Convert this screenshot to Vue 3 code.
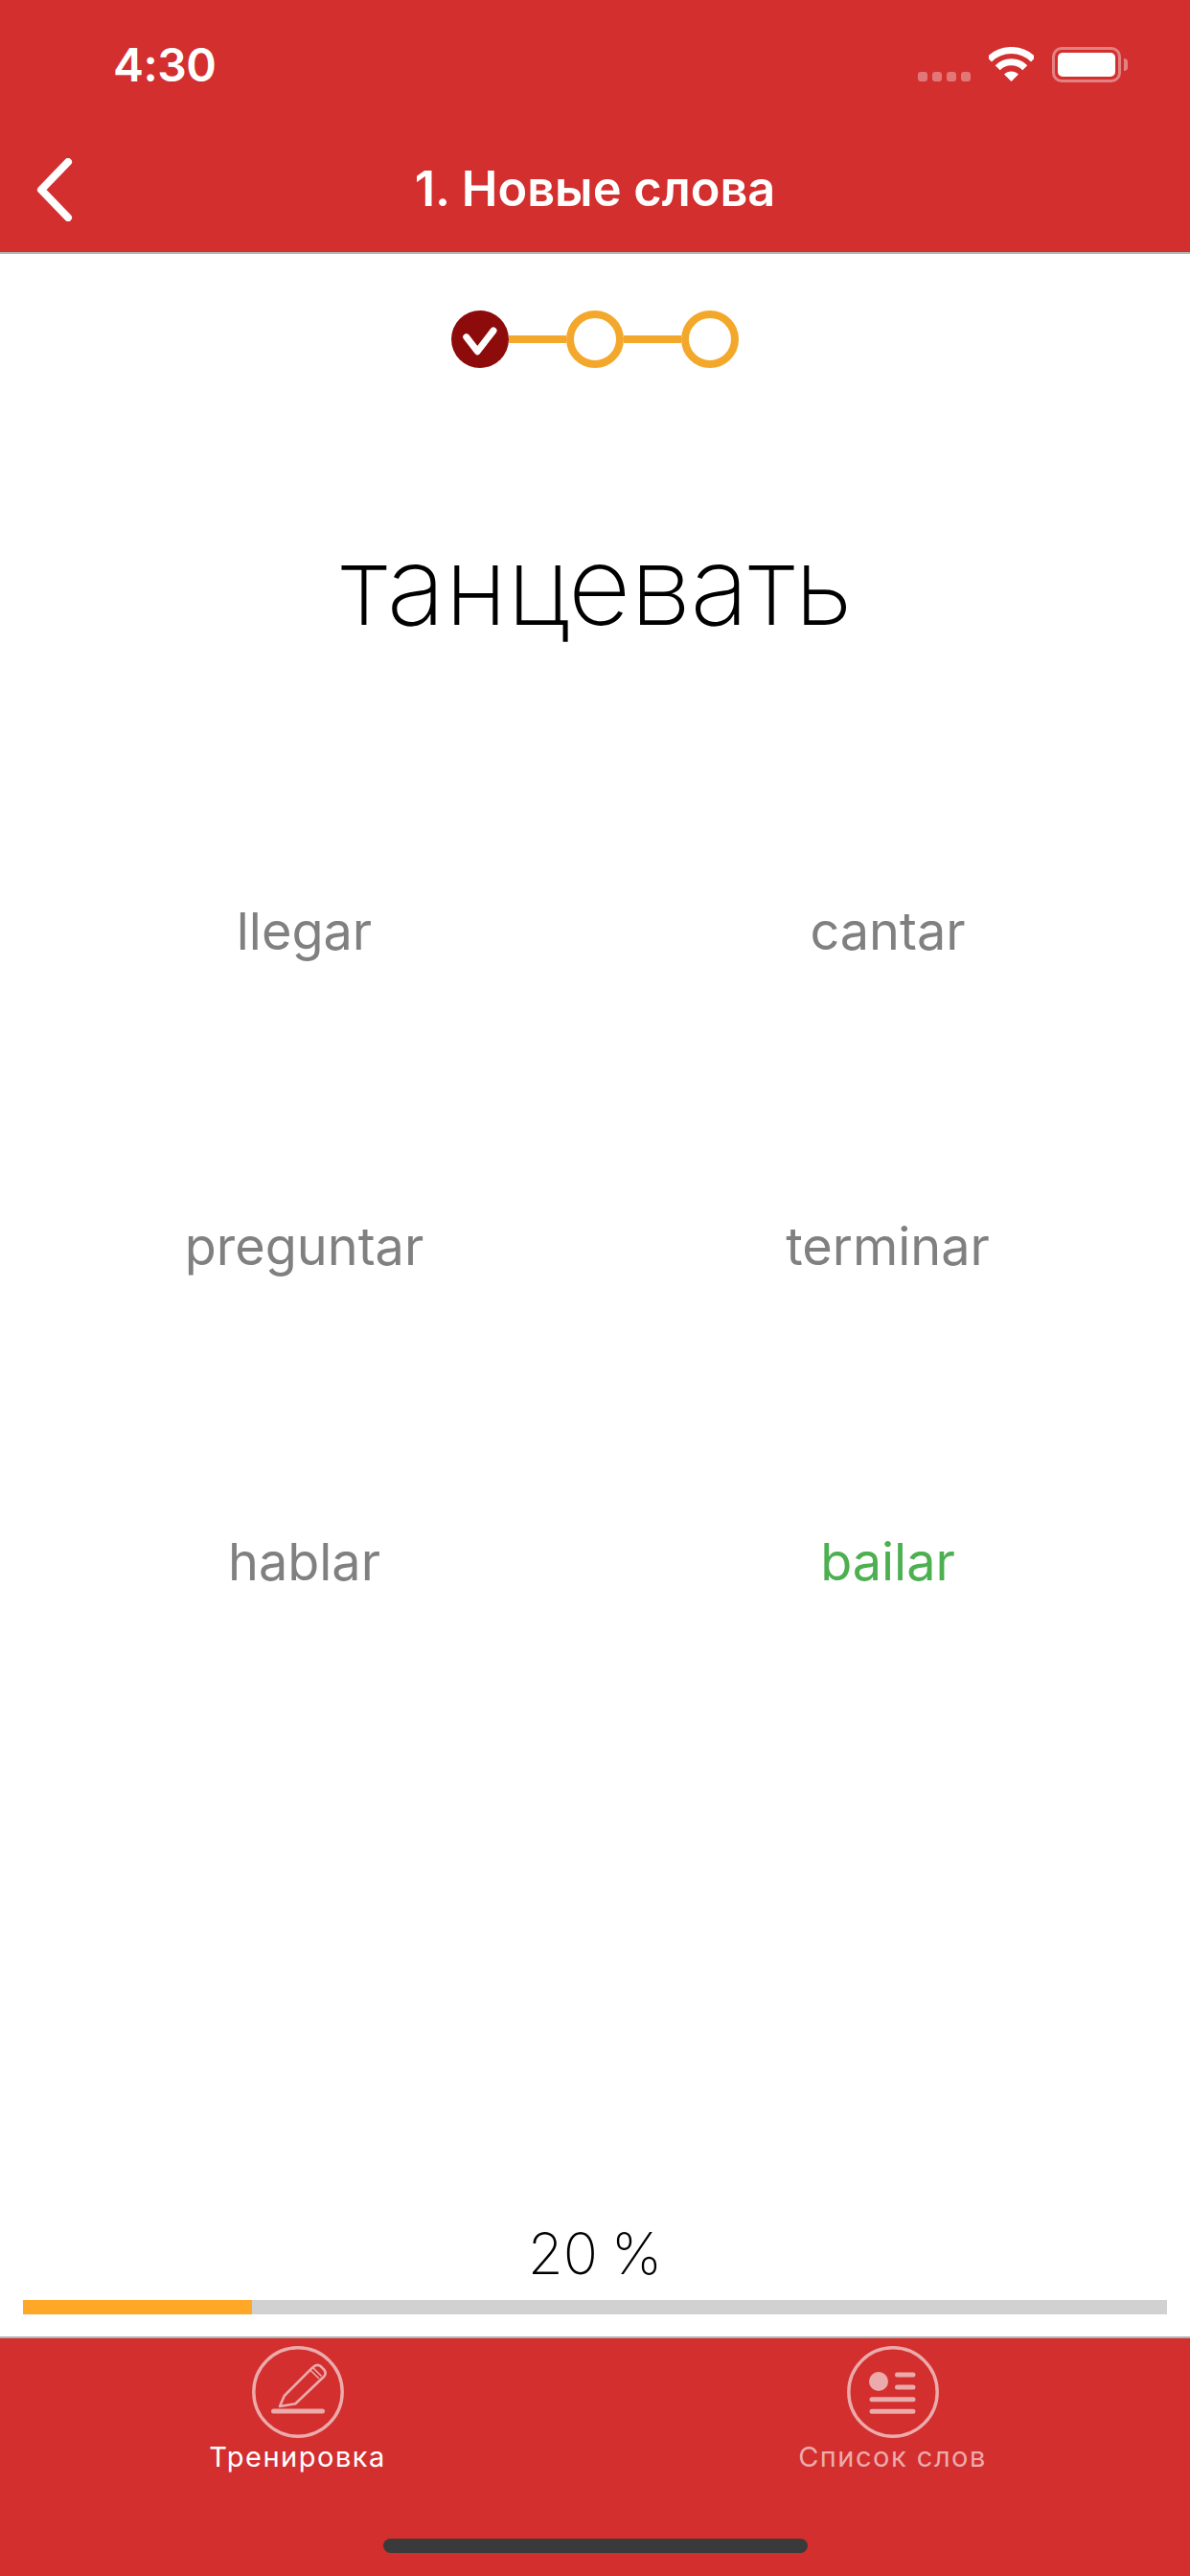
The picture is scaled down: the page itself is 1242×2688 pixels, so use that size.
<script setup>
import { ref } from 'vue'

const progresso = ref(20)
const opcoes = ref([
  { texto: 'llegar', certa: false },
  { texto: 'cantar', certa: false },
  { texto: 'preguntar', certa: false },
  { texto: 'terminar', certa: false },
  { texto: 'hablar', certa: false },
  { texto: 'bailar', certa: true }
])
</script>

<template>
  <div class="tela">
    <header class="topo">
      <div class="status">
        <span class="hora">4:30</span>
        <div class="status-icones">
          <div class="sinal"><i></i><i></i><i></i><i></i></div>
          <svg class="wifi" width="47" height="36" viewBox="0 0 47 36">
            <path d="M.5 13A32.5 32.5 0 0 1 46.5 13" fill="none" stroke="#fff" stroke-width="7" />
            <path d="M9.2 21.7A20.2 20.2 0 0 1 37.8 21.7" fill="none" stroke="#fff" stroke-width="7" />
            <path d="M23.5 36L16 28.5A10.6 10.6 0 0 1 31 28.5Z" fill="#fff" />
          </svg>
          <div class="bateria"><div class="carga"></div></div>
          <div class="bateria-ponta"></div>
        </div>
      </div>
      <nav class="barra">
        <svg class="voltar" width="40" height="66" viewBox="0 0 40 66">
          <path d="M33 4L5 33L33 62" fill="none" stroke="#fff" stroke-width="8" stroke-linecap="round" stroke-linejoin="round" />
        </svg>
        <h1>1. Новые слова</h1>
      </nav>
    </header>

    <main class="conteudo">
      <div class="passos">
        <div class="passo feito">
          <svg width="60" height="60" viewBox="0 0 60 60">
            <path d="M15.7 27.7L27.3 42.7L44 21" fill="none" stroke="#fff" stroke-width="7" stroke-linecap="round" stroke-linejoin="round" />
          </svg>
        </div>
        <div class="linha"></div>
        <div class="passo"></div>
        <div class="linha"></div>
        <div class="passo"></div>
      </div>

      <div class="palavra">танцевать</div>

      <div class="opcoes">
        <div
          v-for="opcao in opcoes"
          :key="opcao.texto"
          class="opcao"
          :class="{ certa: opcao.certa }"
        >
          {{ opcao.texto }}
        </div>
      </div>

      <div class="progresso">
        <div class="porcento">{{ progresso }} %</div>
        <div class="trilho">
          <div class="preenchido" :style="{ width: progresso + '%' }"></div>
        </div>
      </div>
    </main>

    <footer class="rodape">
      <div class="abas">
        <div class="aba ativa">
          <svg width="96" height="96" viewBox="0 0 96 96">
            <circle cx="48" cy="48" r="46.2" fill="none" stroke="#ecabab" stroke-width="3.4" />
            <path d="M29 63L33.7 52L63 22.7Q68 18 71.5 21L75.5 25Q78 29 75 32L45.3 60.3Z" fill="none" stroke="#ecabab" stroke-width="2.6" stroke-linejoin="round" />
            <path d="M60.7 25L70 34M63.5 22.5L72.5 31.5" fill="none" stroke="#ecabab" stroke-width="1.6" />
            <path d="M22.5 68H73.5" fill="none" stroke="#ecabab" stroke-width="5" stroke-linecap="round" />
          </svg>
          <span>Тренировка</span>
        </div>
        <div class="aba">
          <svg width="96" height="96" viewBox="0 0 96 96">
            <circle cx="48" cy="48" r="46.2" fill="none" stroke="#ecabab" stroke-width="3.4" />
            <circle cx="33" cy="37" r="10" fill="#ecabab" />
            <path d="M52.5 30H69M52.5 43H69M26 55.7H69M26 68.3H69" fill="none" stroke="#ecabab" stroke-width="5" stroke-linecap="round" />
          </svg>
          <span>Список слов</span>
        </div>
      </div>
      <div class="home"></div>
    </footer>
  </div>
</template>

<style scoped>
.tela {
  width: 1242px;
  height: 2688px;
  display: flex;
  flex-direction: column;
  background: #fff;
  font-family: Inter, "Liberation Sans", sans-serif;
  overflow: hidden;
}

.topo {
  background: #d32f2f;
  border-bottom: 2px solid #b3b3b3;
  color: #fff;
}

.status {
  height: 132px;
  box-sizing: border-box;
  padding: 50px 65px 0 118px;
  display: flex;
  justify-content: space-between;
  align-items: flex-start;
}

.hora {
  font-size: 48px;
  font-weight: 600;
  line-height: 36px;
  letter-spacing: -0.5px;
}

.status-icones {
  display: flex;
  align-items: flex-start;
  margin-top: -1px;
}

.sinal {
  display: flex;
  gap: 5px;
  margin: 26px 19px 0 0;
}

.sinal i {
  width: 10px;
  height: 10px;
  border-radius: 3px;
  background: rgba(255, 255, 255, 0.35);
}

.bateria {
  width: 72px;
  height: 37px;
  box-sizing: border-box;
  border: 3px solid rgba(255, 255, 255, 0.4);
  border-radius: 10px;
  padding: 3px;
  margin-left: 19px;
}

.carga {
  width: 100%;
  height: 100%;
  background: #fff;
  border-radius: 5px;
}

.bateria-ponta {
  width: 4px;
  height: 13px;
  margin: 12px 0 0 3px;
  background: rgba(255, 255, 255, 0.4);
  border-radius: 0 4px 4px 0;
}

.barra {
  height: 131px;
  display: grid;
  grid-template-columns: 1fr auto 1fr;
  align-items: center;
  box-sizing: border-box;
}

.voltar {
  margin-left: 38px;
}

h1 {
  margin: 0;
  font-size: 50.5px;
  font-weight: 600;
  line-height: 1;
}

.conteudo {
  flex: 1;
  display: flex;
  flex-direction: column;
}

.passos {
  display: flex;
  justify-content: center;
  align-items: center;
  margin-top: 59px;
}

.passo {
  width: 60px;
  height: 60px;
  box-sizing: border-box;
  border: 8px solid #f3a82b;
  border-radius: 50%;
}

.passo.feito {
  border: 0;
  background: #8e0b0b;
}

.passo svg {
  display: block;
}

.linha {
  width: 60px;
  height: 8px;
  background: #f3a82b;
}

.palavra {
  margin-top: 162px;
  padding-left: 3px;
  text-align: center;
  font-size: 114px;
  font-weight: 160;
  letter-spacing: -0.7px;
  line-height: 130px;
  color: #000;
}

.opcoes {
  display: grid;
  grid-template-columns: 1fr 1fr;
  grid-auto-rows: 329px;
  padding: 0 11px 0 13px;
  margin-top: 261px;
}

.opcao {
  display: flex;
  justify-content: center;
  align-items: flex-start;
  font-size: 54px;
  line-height: 70px;
  color: #808080;
}

.opcao.certa {
  color: #4caf50;
}

.progresso {
  margin-top: auto;
  padding: 0 24px 23px;
}

.porcento {
  text-align: center;
  font-size: 60px;
  font-weight: 200;
  line-height: 70px;
  margin-bottom: 14px;
  color: #000;
  word-spacing: -3px;
}

.trilho {
  height: 15px;
  background: #d1d1d1;
}

.preenchido {
  height: 100%;
  background: #ffa726;
}

.rodape {
  height: 250px;
  box-sizing: border-box;
  background: #d32f2f;
  border-top: 2px solid #b3b3b3;
  display: flex;
  flex-direction: column;
}

.abas {
  display: grid;
  grid-template-columns: 1fr 1fr;
  padding-top: 8px;
}

.aba {
  display: flex;
  flex-direction: column;
  align-items: center;
  color: #ecabab;
  font-size: 29px;
  line-height: 36px;
  letter-spacing: 1.5px;
}

.aba.ativa {
  color: #fff;
}

.aba svg {
  display: block;
  margin-bottom: 2px;
}

.home {
  width: 443px;
  height: 15px;
  margin: auto auto 24px;
  background: #3a3a3a;
  border-radius: 8px;
}
</style>

<style>
body {
  background: #fff;
}
</style>
